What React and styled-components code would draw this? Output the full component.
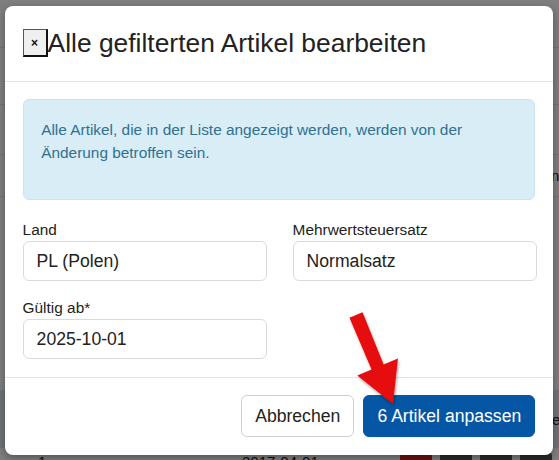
import styled, { createGlobalStyle } from "styled-components";

const GlobalStyle = createGlobalStyle`
  html, body { margin: 0; padding: 0; }
  body {
    font-family: "Liberation Sans", Arial, Helvetica, sans-serif;
    background: #fff;
    overflow: hidden;
  }
  * { box-sizing: border-box; }
`;

const Screen = styled.div`
  position: relative;
  width: 559px;
  height: 460px;
  overflow: hidden;
  background: #fff;
`;

/* page that sits behind the dimmed backdrop */
const Behind = styled.div`
  display: flex;
  flex-direction: column;
  width: 100%;
  height: 100%;
  color: #222;
  font-size: 15px;
`;

const BehindRow = styled.div`
  display: flex;
  align-items: ${(p) => (p.top ? "flex-start" : "center")};
  flex: 0 0 ${(p) => p.h}px;
  padding-left: ${(p) => p.pl || 0}px;
  border-bottom: ${(p) => (p.line ? "1px solid #e4e4e4" : "none")};
  background: ${(p) => p.bg || "transparent"};
  gap: 8px;
  line-height: 17px;
`;

const Cell = styled.span`
  width: ${(p) => p.w}px;
  margin-top: 5px;
`;

const Badge = styled.span`
  width: 32px;
  height: 14px;
  margin-top: 3px;
  border-radius: 5px;
  background: ${(p) => p.color};
`;

const Backdrop = styled.div`
  position: absolute;
  inset: 0;
  background: rgba(0, 0, 0, 0.5);
`;

const Modal = styled.div`
  position: absolute;
  left: 5px;
  top: 6px;
  width: 548px;
  display: flex;
  flex-direction: column;
  background: #fff;
  border-radius: 8px;
  box-shadow: 0 3px 9px rgba(0, 0, 0, 0.35);
  color: #222;
`;

const Header = styled.div`
  display: flex;
  align-items: center;
  padding: 17.6px;
  border-bottom: 1px solid #e3e3e3;
`;

const CloseButton = styled.button`
  width: 25px;
  height: 28px;
  padding: 0;
  margin: 0;
  background: #efefef;
  border-style: solid;
  border-width: 1px 2px 2px 1px;
  border-color: #555 #111 #111 #555;
  font-family: inherit;
  font-size: 12px;
  font-weight: bold;
  line-height: 1;
  color: #111;
`;

const Title = styled.h4`
  margin: 0;
  font-size: 26.4px;
  line-height: 39.6px;
  font-weight: 400;
  color: #222;
`;

const Body = styled.div`
  padding: 17.6px;
  display: flex;
  flex-direction: column;
`;

const Alert = styled.div`
  padding: 17.6px;
  margin-bottom: 17.6px;
  background: #d9edf7;
  border: 1px solid #c8e5f0;
  border-radius: 6px;
  color: #31708f;
  font-size: 15.4px;
  line-height: 23.1px;

  p {
    margin: 0 0 17.6px;
  }
`;

const FormGrid = styled.div`
  display: grid;
  grid-template-columns: 244px 244px;
  column-gap: 26px;
  row-gap: 15px;
`;

const Field = styled.div`
  display: flex;
  flex-direction: column;
`;

const Label = styled.label`
  font-size: 15.4px;
  line-height: 23.1px;
  color: #222;
`;

const Input = styled.input`
  height: 40px;
  padding: 0 13px;
  border: 1px solid #dadada;
  border-radius: 6px;
  font-family: inherit;
  font-size: 17.6px;
  color: #222;
  background: #fff;
  outline: none;
`;

const Footer = styled.div`
  display: flex;
  justify-content: flex-end;
  gap: 8.8px;
  padding: 17.6px;
  border-top: 1px solid #e3e3e3;
`;

const Button = styled.button`
  height: 41.6px;
  padding: 0 13.2px;
  border-radius: 6px;
  font-family: inherit;
  font-size: 17.6px;
  border: 1px solid ${(p) => (p.primary ? "#0556a4" : "#cfcfcf")};
  background: ${(p) => (p.primary ? "#0556a4" : "#fff")};
  color: ${(p) => (p.primary ? "#fff" : "#222")};
`;

const Arrow = styled.svg`
  position: absolute;
  left: 340px;
  top: 305px;
  width: 70px;
  height: 110px;
  overflow: visible;
`;

export default function App() {
  return (
    <>
      <GlobalStyle />
      <Screen>
        <Behind>
          <BehindRow h={48} line />
          <BehindRow h={57} line />
          <BehindRow h={50} line />
          <BehindRow h={42} line pl={551}>
            n
          </BehindRow>
          <BehindRow h={193} />
          <BehindRow h={58} bg="#dcebf2" pl={552}>
            e
          </BehindRow>
          <BehindRow h={14} pl={38} top>
            <Cell w={196}>1</Cell>
            <Cell w={150}>2017-04-01</Cell>
            <Badge color="#c62828" />
            <Badge color="#555" />
            <Badge color="#555" />
            <Badge color="#555" />
          </BehindRow>
        </Behind>
        <Backdrop />
        <Modal>
          <Header>
            <CloseButton>×</CloseButton>
            <Title>Alle gefilterten Artikel bearbeiten</Title>
          </Header>
          <Body>
            <Alert>
              <p>
                Alle Artikel, die in der Liste angezeigt werden, werden von der
                Änderung betroffen sein.
              </p>
            </Alert>
            <FormGrid>
              <Field>
                <Label>Land</Label>
                <Input defaultValue="PL (Polen)" readOnly />
              </Field>
              <Field>
                <Label>Mehrwertsteuersatz</Label>
                <Input defaultValue="Normalsatz" readOnly />
              </Field>
              <Field>
                <Label>Gültig ab*</Label>
                <Input defaultValue="2025-10-01" readOnly />
              </Field>
            </FormGrid>
          </Body>
          <Footer>
            <Button>Abbrechen</Button>
            <Button primary>6 Artikel anpassen</Button>
          </Footer>
        </Modal>
        <Arrow viewBox="0 0 70 110">
          <defs>
            <filter id="arrowShadow" x="-30%" y="-30%" width="160%" height="160%">
              <feDropShadow dx="1" dy="2" stdDeviation="1.5" floodColor="#000" floodOpacity="0.35" />
            </filter>
          </defs>
          <polygon
            points="9.5,12.7 22.5,7.3 43.6,59.5 57.9,53.6 53,99 17.3,70.4 31.6,64.5"
            fill="#e50808"
            filter="url(#arrowShadow)"
          />
        </Arrow>
      </Screen>
    </>
  );
}
